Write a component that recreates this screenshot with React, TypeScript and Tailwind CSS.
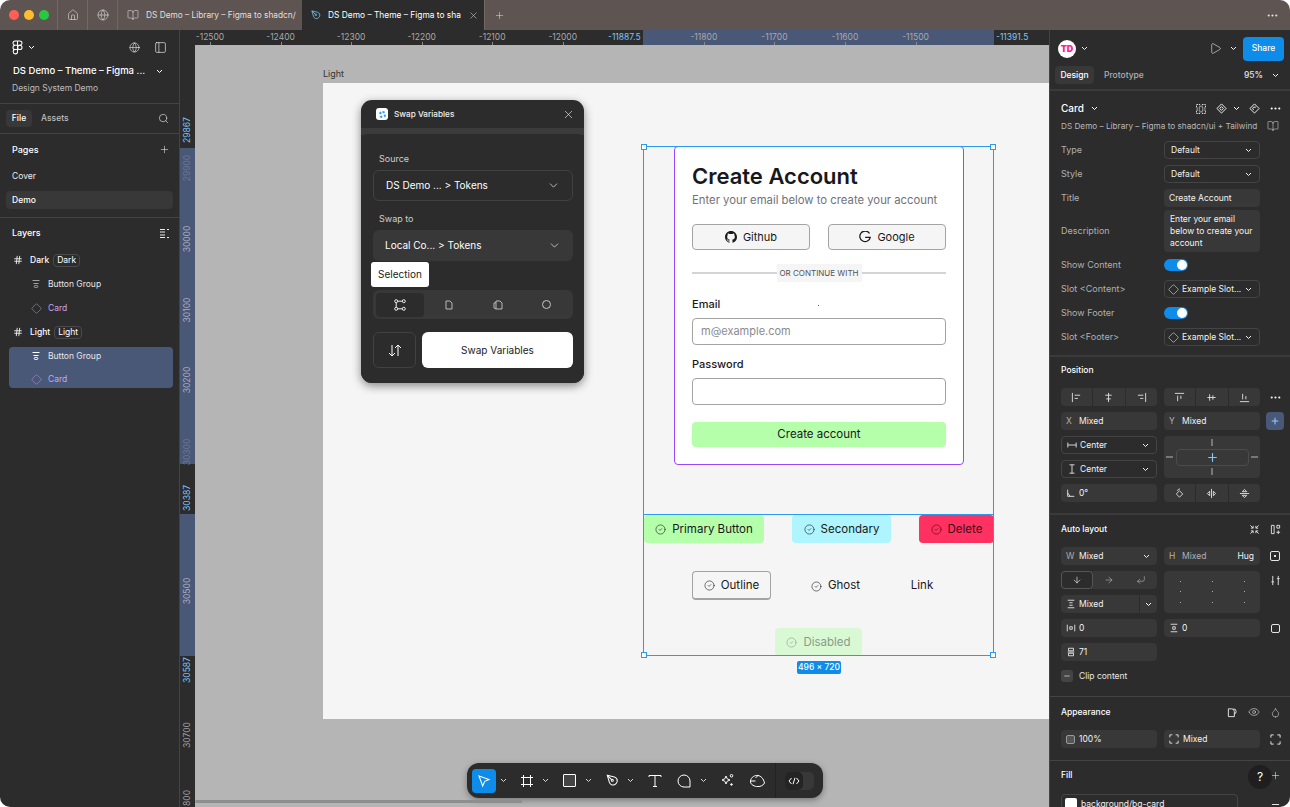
import React from 'react';
import {
  Home, Globe, BookOpen, X, Plus, MoreHorizontal, ChevronDown, Search, PanelLeft, Hash, Diamond,
  Play, ArrowDown, ArrowRight, CornerDownLeft, Eye, Droplet, CircleCheck, Minus,
} from 'lucide-react';

const inter = { fontFamily: 'Inter, sans-serif' };

const Chev = ({ className = 'text-white' }: { className?: string }) => (
  <svg width="7" height="5" viewBox="0 0 7 5" className={`shrink-0 ${className}`} fill="none" stroke="currentColor" strokeWidth="1"><path d="M1 1l2.5 2.5L6 1" /></svg>
);

const PenNib = ({ size = 14, className = '' }: { size?: number; className?: string }) => (
  <svg width={size} height={size} viewBox="0 0 16 16" fill="none" stroke="currentColor" strokeWidth="1.1" className={className}>
    <path d="M2.5 2.5l7.5 1.8c1.3.3 2.3 1.2 2.8 2.4.6 1.7.1 3.6-1.3 4.9-1.3 1.2-3 1.5-4.5.9-1.2-.5-2-1.5-2.4-2.8z" />
    <circle cx="7.8" cy="7.8" r="1.1" />
    <path d="M2.5 2.5l4.5 4.5" />
  </svg>
);

function TitleBar() {
  return (
    <div className="flex h-[30px] shrink-0 items-stretch bg-[#5e5553] text-[#e3dfde]">
      <div className="flex w-[58px] items-center gap-[5px] border-r border-[#716966] pl-[9px]">
        <span className="h-[10px] w-[10px] rounded-full bg-[#ff5f57]" />
        <span className="h-[10px] w-[10px] rounded-full bg-[#febc2e]" />
        <span className="h-[10px] w-[10px] rounded-full bg-[#28c840]" />
      </div>
      <div className="flex w-[30px] items-center justify-center border-r border-[#716966]"><Home size={12} strokeWidth={1.2} /></div>
      <div className="flex w-[30px] items-center justify-center border-r border-[#716966]"><Globe size={12} strokeWidth={1.2} /></div>
      <div className="flex w-[184px] items-center gap-[7px] whitespace-nowrap pl-[9px] text-[8.3px]">
        <BookOpen size={12} strokeWidth={1.1} className="shrink-0" />
        <span>DS Demo – Library – Figma to shadcn/</span>
      </div>
      <div className="flex w-[182px] items-center gap-[6px] bg-[#2c2c2c] pl-[8px] text-white">
        <PenNib size={12} className="shrink-0 text-[#6cc0f5]" />
        <span className="w-[130px] whitespace-nowrap text-[8.4px]">DS Demo – Theme – Figma to sha</span>
        <X size={11} strokeWidth={1.2} className="ml-[4px] shrink-0 text-[#d6d6d6]" />
      </div>
      <div className="flex w-[30px] items-center justify-center border-l border-[#716966]"><Plus size={11} strokeWidth={1.1} /></div>
      <div className="ml-auto flex items-center pr-[11px]"><MoreHorizontal size={13} /></div>
    </div>
  );
}

function Divider() {
  return <div className="h-px bg-[#444444]" />;
}

function LayerRow({ name, tag, indent, kind, selected }: { name: string; tag?: string; indent?: boolean; kind: 'frame' | 'group' | 'card'; selected?: boolean }) {
  return (
    <div className={`flex h-[24px] items-center gap-[4px] ${indent ? 'pl-[31px]' : 'pl-[13px]'} text-[8.5px]`}>
      {kind === 'frame' && <Hash size={10} strokeWidth={2} className="mr-[3px] text-white" />}
      {kind === 'group' && (
        <svg width="10" height="10" viewBox="0 0 10 10" fill="none" stroke="currentColor" className={`mr-[3px] ${selected ? 'text-white' : 'text-[#a0a0a0]'}`}>
          <path d="M1.5 1.5h7M2.5 4.5h5" /><rect x="3.2" y="6.5" width="3.6" height="2" rx="1" />
        </svg>
      )}
      {kind === 'card' && <Diamond size={11} strokeWidth={1.1} className="mr-[2px] text-[#b79be6]" />}
      <span className={kind === 'card' ? 'text-[#c7a4f4]' : kind === 'frame' ? 'font-medium text-white' : 'text-[#e6e6e6]'}>{name}</span>
      {tag && <span className="rounded-[4px] border border-[#4a4a4a] px-[3px] text-[8.5px] leading-[11px] text-white">{tag}</span>}
    </div>
  );
}

function LeftPanel() {
  return (
    <div className="flex w-[180px] shrink-0 flex-col border-r border-[#444444] bg-[#2c2c2c] text-[#f2f2f2]">
      <div className="flex h-[73px] flex-col">
        <div className="flex h-[34px] items-center pl-[12px] pr-[12px] pt-[1px]">
          <svg width="11" height="15" viewBox="0 0 11 16" fill="none" stroke="white" strokeWidth="1.1">
            <path d="M5.5 1H3a2.3 2.3 0 000 4.6h2.5zM5.5 1H8a2.3 2.3 0 010 4.6H5.5zM5.5 5.6H3a2.3 2.3 0 000 4.6h2.5zM5.5 10.2H3a2.3 2.3 0 102.5 2.3z" />
            <circle cx="8" cy="7.9" r="2.3" />
          </svg>
          <Chev className="ml-[5px] text-white" />
          <Globe size={11} strokeWidth={1.3} className="ml-auto" />
          <PanelLeft size={13} strokeWidth={1.2} className="ml-[14px]" />
        </div>
        <div className="flex items-center whitespace-nowrap pl-[13px] text-[9.5px] font-medium leading-[14px] text-white">
          DS Demo – Theme – Figma ...
          <Chev className="ml-[11px]" />
        </div>
        <div className="pl-[12px] pt-[4px] text-[8.5px] leading-[12px] text-[#bdbdbd]">Design System Demo</div>
      </div>
      <Divider />
      <div className="flex h-[29px] items-center pl-[6px] pr-[10px] text-[8.5px] font-medium">
        <span className="flex h-[17px] w-[26px] items-center justify-center rounded-[4px] bg-[#383838] text-white">File</span>
        <span className="ml-[9px] text-[#bdbdbd]">Assets</span>
        <Search size={11} strokeWidth={1.3} className="ml-auto" />
      </div>
      <Divider />
      <div className="flex h-[31px] items-center justify-between pl-[12px] pr-[9px] text-[9px] font-medium text-white">
        Pages <Plus size={11} strokeWidth={1.1} />
      </div>
      <div className="-mt-[1px] flex h-[24px] items-center pl-[12px] text-[8.5px] text-[#ececec]">Cover</div>
      <div className="mx-[6px] mt-[3px] flex h-[18px] items-center rounded-[4px] bg-[#383838] pl-[6px] text-[8.5px] font-medium text-white">Demo</div>
      <div className="h-[8px]" />
      <Divider />
      <div className="flex h-[30px] items-center justify-between pl-[12px] pr-[9px] text-[9px] font-medium text-white">
        Layers
        <svg width="11" height="11" viewBox="0 0 11 11" fill="none" stroke="white" strokeWidth=".9"><path d="M1 1.5h5M1 4h5M1 7h5M1 9.5h5M8 1l1 1 1-1M8 10l1-1 1 1" /></svg>
      </div>
      <LayerRow name="Dark" tag="Dark" kind="frame" />
      <LayerRow name="Button Group" indent kind="group" />
      <LayerRow name="Card" indent kind="card" />
      <LayerRow name="Light" tag="Light" kind="frame" />
      <div className="relative ml-[9px] mt-[3px] h-[41px] w-[164px] rounded-[4px] bg-[#4a5878]">
        <div className="-ml-[9px] -mt-[3px]">
          <LayerRow name="Button Group" indent kind="group" selected />
          <div className="-mt-[1px]"><LayerRow name="Card" indent kind="card" selected /></div>
        </div>
      </div>
    </div>
  );
}

const TOP_TICKS = [-12500, -12400, -12300, -12200, -12100, -12000];
const TOP_TICKS_SEL = [-11800, -11700, -11600, -11500];

function TopRuler() {
  const xOf = (v: number) => 210 + (v + 12500) * 0.7055 - 180;
  return (
    <div className="relative h-[15px] shrink-0 bg-[#2c2c2c] text-[8.5px] text-[#a8a8a8]">
      <div className="absolute bottom-0 left-[463px] top-0 w-[351px] bg-[#4a5878]" />
      {[...TOP_TICKS, ...TOP_TICKS_SEL].map((v) => (
        <span key={v} className="absolute top-[1px] -translate-x-1/2" style={{ left: xOf(v) }}>{v}</span>
      ))}
      {[...TOP_TICKS, ...TOP_TICKS_SEL].map((v) => (
        <span key={'t' + v} className="absolute bottom-0 h-[3px] w-px bg-[#8a8a8a]" style={{ left: xOf(v) }} />
      ))}
      <span className="absolute left-[428px] top-[1px] text-[#7cc4fa]">-11887.5</span>
      <span className="absolute left-[816px] top-[1px] text-[#7cc4fa]">-11391.5</span>
    </div>
  );
}

function LeftRuler() {
  const labels: [number, string, string][] = [
    [130 - 45, '29867', 'text-[#7cc4fa]'],
    [168 - 45, '29900', 'text-[#6b7690]'],
    [239 - 45, '30000', 'text-[#a8aebd]'],
    [310 - 45, '30100', 'text-[#a8aebd]'],
    [380 - 45, '30200', 'text-[#a8aebd]'],
    [452 - 45, '30300', 'text-[#6b7690]'],
    [498 - 45, '30387', 'text-[#7cc4fa]'],
    [591 - 45, '30500', 'text-[#a8aebd]'],
    [670 - 45, '30587', 'text-[#7cc4fa]'],
    [735 - 45, '30700', 'text-[#a0a0a0]'],
    [798 - 45, '800', 'text-[#a0a0a0]'],
  ];
  return (
    <div className="relative w-[15px] shrink-0 overflow-hidden bg-[#2c2c2c] text-[8.5px]">
      <div className="absolute left-0 right-0 top-[103px] h-[316px] bg-[#4a5878]" />
      <div className="absolute left-0 right-0 top-[469px] h-[142px] bg-[#4a5878]" />
      {labels.map(([y, t, c]) => (
        <span key={t} className={`absolute left-[7px] -translate-x-1/2 -translate-y-1/2 -rotate-90 whitespace-nowrap ${c}`} style={{ top: y }}>{t}</span>
      ))}
    </div>
  );
}

function Handle({ className }: { className: string }) {
  return <span className={`absolute h-[6px] w-[6px] border border-[#2b9bf0] bg-white ${className}`} />;
}

function DemoBtn({ label, className, icon = true }: { label: string; className: string; icon?: boolean }) {
  return (
    <div className={`absolute flex items-center justify-center gap-[6px] whitespace-nowrap rounded-[4px] pt-[1px] text-[11.5px] ${className}`}>
      {icon && <CircleCheck size={11} strokeWidth={1.3} />}
      {label}
    </div>
  );
}

function SwapPanel() {
  return (
    <div className="absolute left-[166px] top-[55px] w-[223px] rounded-[11px] bg-[#2c2c2c] text-white shadow-[0_3px_10px_rgba(0,0,0,0.45)]">
      <div className="flex h-[28px] items-center pl-[15px] pr-[9px]">
        <span className="flex h-[12px] w-[12px] items-center justify-center rounded-[3px] bg-white">
          <span className="h-[7px] w-[7px] rounded-full border-2 border-dotted border-[#2b9bf0]" />
        </span>
        <span className="ml-[6px] text-[8.2px] font-medium text-[#efefef]">Swap Variables</span>
        <X size={13} strokeWidth={1.1} className="ml-auto" />
      </div>
      <div className="h-[7px] bg-[#3b3b3b]" />
      <div className="relative -mt-px flex h-[249px] flex-col rounded-b-[11px] rounded-t-[6px] bg-[#2c2c2c] pl-[12px] pr-[11px] text-[9px]">
        <div className="pl-[6px] pt-[18px] leading-[13px] text-[#cfcfcf]">Source</div>
        <div className="mt-[5px] flex h-[31px] items-center justify-between rounded-[6px] border border-[#414141] px-[12px] text-[10px]">
          DS Demo ... &gt; Tokens <ChevronDown size={13} strokeWidth={1.2} />
        </div>
        <div className="pl-[6px] pt-[11px] leading-[13px] text-[#cfcfcf]">Swap to</div>
        <div className="mt-[5px] flex h-[31px] items-center justify-between rounded-[6px] bg-[#383838] px-[12px] text-[10px]">
          Local Co... &gt; Tokens <ChevronDown size={13} strokeWidth={1.2} />
        </div>
        <div className="relative z-10 -ml-[2px] mt-[1px] flex h-[25px] w-[58px] items-center justify-center rounded-[3px] bg-white text-[10px] text-[#222]">Selection</div>
        <div className="mt-[3px] flex h-[29px] items-center gap-[1px] rounded-[6px] bg-[#383838] px-[3px] text-[#c6c6c6]">
          <div className="flex h-[24px] w-[48px] items-center justify-center rounded-[4px] bg-[#2c2c2c]">
            <svg width="12" height="12" viewBox="0 0 12 12" fill="none" stroke="white" strokeWidth=".9"><circle cx="2.2" cy="2.2" r="1.5" /><circle cx="9.8" cy="2.2" r="1.5" /><circle cx="2.2" cy="9.8" r="1.5" /><circle cx="9.8" cy="9.8" r="1.5" /><path d="M3.7 2.2h4.600M2.200 3.700v4.600M3.700 9.800h4.600" /></svg>
          </div>
          <div className="flex flex-1 items-center justify-center"><svg width="10" height="10" viewBox="0 0 10 10" fill="none" stroke="currentColor" strokeWidth=".9"><path d="M2 1h4l2 2v6H2z" /></svg></div>
          <div className="flex flex-1 items-center justify-center"><svg width="12" height="10" viewBox="0 0 12 10" fill="none" stroke="currentColor" strokeWidth=".9"><path d="M4 1h4l2 2v6H4zM4 2.500L2 3v5l2 1" /></svg></div>
          <div className="flex flex-1 items-center justify-center"><span className="h-[9px] w-[9px] rounded-full border border-[#c6c6c6]" /></div>
        </div>
        <div className="mt-[13px] flex h-[36px] gap-[6px]">
          <div className="flex w-[43px] items-center justify-center rounded-[6px] border border-[#414141]">
            <svg width="14" height="13" viewBox="0 0 14 13" fill="none" stroke="white" strokeWidth="1"><path d="M4 1v11M1 9l3 3 3-3M10 12V1M7 4l3-3 3 3" /></svg>
          </div>
          <div className="flex flex-1 items-center justify-center rounded-[6px] bg-white text-[10px] text-[#222]">Swap Variables</div>
        </div>
      </div>
    </div>
  );
}

function GithubIcon() {
  return (
    <svg width="12" height="12" viewBox="0 0 16 16" fill="#1a1a1a"><path d="M8 0C3.58 0 0 3.58 0 8c0 3.54 2.29 6.53 5.47 7.59.4.07.55-.17.55-.38v-1.34c-2.23.48-2.7-1.07-2.7-1.07-.36-.93-.89-1.17-.89-1.17-.73-.5.05-.49.05-.49.8.06 1.23.83 1.23.83.71 1.22 1.87.87 2.33.66.07-.52.28-.87.5-1.07-1.78-.2-3.64-.89-3.64-3.95 0-.87.31-1.59.82-2.15-.08-.2-.36-1.02.08-2.12 0 0 .67-.21 2.2.82a7.6 7.6 0 014 0c1.53-1.04 2.2-.82 2.2-.82.44 1.1.16 1.92.08 2.12.51.56.82 1.27.82 2.15 0 3.07-1.87 3.75-3.65 3.95.29.25.54.73.54 1.48v2.19c0 .21.15.46.55.38A8 8 0 0016 8c0-4.42-3.58-8-8-8z" /></svg>
  );
}

function GoogleIcon() {
  return (
    <svg width="12" height="12" viewBox="0 0 16 16" fill="none" stroke="#1a1a1a" strokeWidth="1.7"><path d="M14 3.3A7 7 0 1015 8.4H8.2" /></svg>
  );
}

function SignupCard() {
  const field = 'h-[27px] rounded-[4px] border border-[#a3a3a3] bg-white';
  return (
    <div className="absolute left-[479px] top-[101px] flex h-[319px] w-[290px] flex-col rounded-[4px] border border-[#9747ff] bg-white px-[17px] text-[#18181b]">
      <div className="pt-[14px] text-[22px] font-semibold leading-[30px]">Create Account</div>
      <div className="mt-[1px] whitespace-nowrap text-[11.3px] leading-[16px] text-[#71717a]">Enter your email below to create your account</div>
      <div className="mt-[16px] flex justify-between">
        <div className="flex h-[26px] w-[118px] items-center justify-center gap-[6px] rounded-[4px] border border-[#a3a3a3] bg-[#f5f5f5] text-[11px]"><GithubIcon />Github</div>
        <div className="flex h-[26px] w-[118px] items-center justify-center gap-[6px] rounded-[4px] border border-[#a3a3a3] bg-[#f5f5f5] text-[11px]"><GoogleIcon />Google</div>
      </div>
      <div className="relative mt-[14px] flex h-[18px] items-center justify-center">
        <div className="absolute inset-x-0 top-[8px] h-[2px] bg-[#d4d4d4]" />
        <span className="relative flex h-[18px] w-[85px] items-center justify-center whitespace-nowrap bg-[#f5f5f5] text-[8px] text-[#52525b]">OR CONTINUE WITH</span>
      </div>
      <div className="mt-[13px] text-[11px] font-medium leading-[18px]">Email</div>
      <div className={`${field} mt-[5px] flex items-center pl-[8px] text-[11px] text-[#8a8a8f]`}>m@example.com</div>
      <div className="mt-[10px] text-[11px] font-medium leading-[18px]">Password</div>
      <div className={`${field} mt-[5px]`} />
      <div className="mt-[17px] flex h-[25px] items-center justify-center rounded-[4px] bg-[#b5ffab] text-[11.5px] text-[#18181b]">Create account</div>
    </div>
  );
}

function Toolbar() {
  const c = 'text-[#d8d8d8]';
  return (
    <div className="absolute bottom-[9px] left-[272px] flex h-[35px] w-[356px] items-center rounded-[12px] bg-[#2c2c2c] pl-[5px] text-white shadow-[0_2px_6px_rgba(0,0,0,0.35)]">
      <div className="flex h-[24px] w-[24px] items-center justify-center rounded-[4px] bg-[#0d8ce9]">
        <svg width="14" height="14" viewBox="0 0 14 14" fill="none" stroke="white" strokeWidth="1.1"><path d="M2 2l10 3.5-4.3 1.8L5.7 12z" /></svg>
      </div>
      <Chev className={`ml-[4px] ${c}`} />
      <svg width="14" height="14" viewBox="0 0 14 14" fill="none" stroke="white" strokeWidth="1" className="ml-[13px]"><path d="M3.5 1v12M10.5 1v12M1 3.5h12M1 10.5h12" /></svg>
      <Chev className={`ml-[8px] ${c}`} />
      <span className="ml-[14px] h-[13px] w-[13px] rounded-[1px] border border-white bg-[#444]" />
      <Chev className={`ml-[9px] ${c}`} />
      <PenNib size={15} className="ml-[13px]" />
      <Chev className={`ml-[7px] ${c}`} />
      <svg width="14" height="14" viewBox="0 0 14 14" fill="none" stroke="white" strokeWidth="1" className="ml-[14px]"><path d="M1 3V1.500h12V3M7 1.500v11M5 12.500h4" /></svg>
      <svg width="14" height="14" viewBox="0 0 14 14" fill="none" stroke="white" strokeWidth="1" className="ml-[15px]"><path d="M7 1a6 6 0 016 6v6H7A6 6 0 017 1z" /></svg>
      <Chev className={`ml-[9px] ${c}`} />
      <svg width="15" height="15" viewBox="0 0 15 15" fill="none" stroke="white" strokeWidth="1" className="ml-[13px]"><path d="M6 3l1.2 2.8L10 7 7.2 8.2 6 11 4.8 8.2 2 7l2.8-1.2z" /><circle cx="11.500" cy="2.800" r="1.300" /><circle cx="11.500" cy="11.500" r=".8" fill="white" /></svg>
      <svg width="17" height="14" viewBox="0 0 17 14" fill="none" stroke="white" strokeWidth="1" className="ml-[14px]"><path d="M1.500 7C2 3 6 1 9 1.500c3 .5 5.500 3 6.500 7.500-1 2.500-4.500 4-8 3.500C4 12 1.200 10 1.500 7zM1.500 7l5 0M9 1.500L6.500 4" /></svg>
      <div className="ml-[9px] h-full w-px bg-[#222]" />
      <div className="ml-[9px] flex h-[18px] w-[29px] rounded-[5px] bg-[#383838]">
        <div className="flex h-[18px] w-[18px] items-center justify-center rounded-[5px] bg-[#242424]">
          <svg width="12" height="8" viewBox="0 0 12 8" fill="none" stroke="white" strokeWidth="1"><path d="M3.500 1L1 4l2.500 3M8.500 1L11 4 8.500 7M7 .8L5 7.200" /></svg>
        </div>
      </div>
    </div>
  );
}

function Canvas() {
  return (
    <div className="relative flex-1 overflow-hidden bg-[#b5b5b5]" style={inter}>
      <span className="absolute left-[128px] top-[22px] text-[9px] text-[#333]">Light</span>
      <div className="absolute left-[128px] top-[38px] h-[636px] w-[740px] bg-[#f5f5f5]" />

      <SignupCard />

      {/* group of demo buttons */}
      <DemoBtn label="Primary Button" className="left-[449px] top-[470px] h-[28px] w-[120px] bg-[#b5ffab] text-[#18181b]" />
      <DemoBtn label="Secondary" className="left-[597px] top-[470px] h-[28px] w-[99px] bg-[#aef5ff] text-[#18181b]" />
      <DemoBtn label="Delete" className="left-[724px] top-[470px] h-[28px] w-[75px] bg-[#ff3161] text-[#3a0a16]" />
      <DemoBtn label="Outline" className="left-[497px] top-[526px] h-[29px] w-[79px] border border-b-2 border-[#a3a3a3] text-[#18181b]" />
      <DemoBtn label="Ghost" className="left-[616px] top-[526px] h-[29px] w-[49px] text-[#18181b]" />
      <DemoBtn label="Link" icon={false} className="left-[716px] top-[526px] h-[29px] w-[22px] text-[#18181b]" />
      <DemoBtn label="Disabled" className="left-[580px] top-[583px] h-[28px] w-[87px] bg-[#d9f9d4] text-[#8c9a8a]" />

      {/* selection overlay */}
      <div className="absolute left-[448px] top-[101px] h-[510px] w-[351px] border border-[#2b9bf0]">
        <Handle className="-left-[3px] -top-[3px]" />
        <Handle className="-right-[3px] -top-[3px]" />
        <Handle className="-bottom-[3px] -left-[3px]" />
        <Handle className="-bottom-[3px] -right-[3px]" />
      </div>
      <div className="absolute left-[448px] top-[469px] h-px w-[351px] bg-[#2b9bf0]" />
      <span className="absolute left-[623px] top-[260px] h-px w-px bg-[#ff00aa]" />
      <div className="absolute left-[602px] top-[616px] flex h-[13px] w-[44px] items-center justify-center whitespace-nowrap rounded-[2px] bg-[#0d8ce9] text-[8.5px] font-medium text-white">496 × 720</div>

      <SwapPanel />

      <Toolbar />
      <div className="absolute bottom-[4px] left-0 h-[3px] w-[327px] rounded-full bg-[#8e8e8e]" />
    </div>
  );
}

function PropRow({ label, children, className = 'h-[18px]' }: { label: string; children: React.ReactNode; className?: string }) {
  return (
    <div className={`flex items-center ${className}`}>
      <span className="w-[114px] pl-[11px] text-[9px] text-[#b0b0b0]">{label}</span>
      {children}
    </div>
  );
}

function Select({ children, icon }: { children: React.ReactNode; icon?: boolean }) {
  return (
    <div className={`flex h-[18px] w-[96px] items-center whitespace-nowrap rounded-[4px] border border-[#444444] ${icon ? 'pl-[3px]' : 'pl-[6px]'} pr-[7px] text-[8.5px] text-[#f2f2f2]`}>
      {icon && <Diamond size={11} strokeWidth={1.1} className="mr-[3px] shrink-0 text-white" />}
      <span>{children}</span>
      <Chev className="ml-auto" />
    </div>
  );
}

function Toggle() {
  return (
    <div className="flex h-[12px] w-[24px] items-center justify-end rounded-full bg-[#0d8ce9] pr-[1px]">
      <span className="h-[10px] w-[10px] rounded-full bg-white" />
    </div>
  );
}

function Field({ children, className = 'w-[96px]' }: { children: React.ReactNode; className?: string }) {
  return <div className={`flex h-[18px] items-center whitespace-nowrap rounded-[4px] bg-[#383838] px-[5px] text-[8.5px] text-[#f2f2f2] ${className}`}>{children}</div>;
}

function Seg({ children }: { children: React.ReactNode }) {
  return <div className="flex h-full flex-1 items-center justify-center border-r border-[#2c2c2c] last:border-r-0">{children}</div>;
}

function Ic({ d, size = 11 }: { d: string; size?: number }) {
  return <svg width={size} height={size} viewBox="0 0 12 12" fill="none" stroke="currentColor" strokeWidth="1" className="shrink-0"><path d={d} /></svg>;
}

function SectionHead({ title, children, className }: { title: string; children?: React.ReactNode; className: string }) {
  return (
    <div className={`flex items-center justify-between pl-[11px] pr-[9px] text-[8.5px] font-medium text-white ${className}`}>
      {title}
      {children}
    </div>
  );
}

function Rows({ children }: { children: React.ReactNode }) {
  return <div className="flex flex-col gap-[6px]">{children}</div>;
}

function TwoCol({ children, extra }: { children: React.ReactNode; extra?: React.ReactNode }) {
  return (
    <div className="flex h-[18px] items-center gap-[7px] pl-[11px]">
      {children}
      {extra && <div className="-ml-[1px] flex w-[18px] items-center justify-center text-[#f2f2f2]">{extra}</div>}
    </div>
  );
}

function RightPanel() {
  return (
    <div className="flex w-[241px] shrink-0 flex-col overflow-hidden border-l border-[#444444] bg-[#2c2c2c] text-[#f2f2f2] [&>*]:shrink-0">
      {/* head */}
      <div className="flex h-[36px] items-center pl-[8px] pr-[6px] pt-[1px]">
        <div className="flex h-[18px] w-[18px] items-center justify-center rounded-full bg-white">
          <span className="text-[9px] font-black leading-none text-[#ff1f8f]">TD</span>
        </div>
        <Chev className="ml-[5px]" />
        <Play size={13} strokeWidth={1.1} className="ml-auto" />
        <Chev className="ml-[8px]" />
        <div className="ml-[6px] flex h-[24px] w-[41px] items-center justify-center rounded-[4px] bg-[#0d8ce9] text-[8.5px] font-medium text-white">Share</div>
      </div>
      <div className="flex h-[18px] items-center pl-[5px] pr-[11px] text-[8.5px] font-medium">
        <span className="flex h-[18px] w-[39px] items-center justify-center rounded-[4px] bg-[#383838] text-white">Design</span>
        <span className="ml-[10px] text-[#b0b0b0]">Prototype</span>
        <span className="ml-auto text-[#e5e5e5]">95%</span>
        <Chev className="ml-[9px]" />
      </div>
      <div className="mt-[5px] h-[2px] bg-[#3a3a3a]" />
      <div className="flex h-[26px] items-center pl-[11px] pr-[8px] pt-[9px] text-[10px] font-medium text-white">
        Card <Chev className="ml-[7px]" />
        <div className="ml-auto flex items-center gap-[9px]">
          <span className="mr-[1px]"><svg width="10" height="10" viewBox="0 0 10 10" fill="none" stroke="white" strokeWidth=".8" strokeDasharray="1.500 .8"><rect x=".5" y=".5" width="3.500" height="3.500" /><rect x="6" y=".5" width="3.500" height="3.500" /><rect x=".5" y="6" width="3.500" height="3.500" /><rect x="6" y="6" width="3.500" height="3.500" /></svg></span>
          <span className="flex items-center gap-[6px]"><Ic d="M6 1l5 5-5 5-5-5zM6 4l2 2-2 2-2-2z" /><Chev /></span>
          <Ic d="M6 1l5 5-5 5-5-5zM7.500 4.500H5L4 6l1 1.500" />
          <MoreHorizontal size={13} />
        </div>
      </div>
      <div className="flex h-[18px] items-center whitespace-nowrap pl-[11px] pr-[11px] text-[8.2px] text-[#b8b8b8]">
        DS Demo – Library – Figma to shadcn/ui + Tailwind
        <BookOpen size={12} strokeWidth={1.1} className="ml-auto shrink-0 text-[#d8d8d8]" />
      </div>
      <div className="h-[6px]" />
      <Rows>
        <PropRow label="Type"><Select>Default</Select></PropRow>
        <PropRow label="Style"><Select>Default</Select></PropRow>
        <PropRow label="Title"><Field>Create Account</Field></PropRow>
      </Rows>
      <div className="h-[3px]" />
      <PropRow label="Description" className="h-[42px]">
        <div className="h-[42px] w-[96px] rounded-[4px] bg-[#383838] py-[3px] pl-[6px] text-[8.5px] leading-[12px] text-[#f2f2f2]">Enter your email below to create your account</div>
      </PropRow>
      <div className="h-[4px]" />
      <Rows>
        <PropRow label="Show Content"><Toggle /></PropRow>
        <PropRow label="Slot <Content>"><Select icon>Example Slot...</Select></PropRow>
        <PropRow label="Show Footer"><Toggle /></PropRow>
        <PropRow label="Slot <Footer>"><Select icon>Example Slot...</Select></PropRow>
      </Rows>
      <div className="mt-[9px] h-[2px] bg-[#3a3a3a]" />

      <SectionHead title="Position" className="h-[31px] pb-[5px]" />
      <div className="flex flex-col gap-[6px]">
        <TwoCol extra={<MoreHorizontal size={13} />}>
          <div className="flex h-[18px] w-[96px] rounded-[4px] bg-[#383838] text-[#e0e0e0]">
            <Seg><Ic d="M1.500 1v10M4 3.500h6M4 7h3.500" /></Seg>
            <Seg><Ic d="M6 1v10M2.500 3.500h7M3.500 7.500h5" /></Seg>
            <Seg><Ic d="M10.500 1v10M2 3.500h6M4.500 7H8" /></Seg>
          </div>
          <div className="flex h-[18px] w-[96px] rounded-[4px] bg-[#383838] text-[#e0e0e0]">
            <Seg><Ic d="M1 1.500h10M4 4v6M7.500 4v3.500" /></Seg>
            <Seg><Ic d="M1.500 6h9M4 2.500v7M7.500 3.500v5" /></Seg>
            <Seg><Ic d="M1 10.500h10M4 2v6M7.500 4.500V8" /></Seg>
          </div>
        </TwoCol>
        <TwoCol extra={<span className="flex h-[18px] w-[18px] items-center justify-center rounded-[4px] bg-[#4a5878] text-[#8ed0ff]"><Plus size={10} strokeWidth={2.5} /></span>}>
          <Field><span className="w-[13px] text-[#b0b0b0]">X</span>Mixed</Field>
          <Field><span className="w-[13px] text-[#b0b0b0]">Y</span>Mixed</Field>
        </TwoCol>
        <div className="flex h-[42px] gap-[7px] pl-[11px]">
          <div className="flex w-[96px] flex-col gap-[6px]">
            <div className="flex h-[18px] items-center rounded-[4px] border border-[#444444] pl-[5px] pr-[7px] text-[8.5px]">
              <Ic d="M1 3v6M11 3v6M1 6h10" size={10} /><span className="ml-[3px]">Center</span><Chev className="ml-auto" />
            </div>
            <div className="flex h-[18px] items-center rounded-[4px] border border-[#444444] pl-[5px] pr-[7px] text-[8.5px]">
              <Ic d="M3 1h6M3 11h6M6 1v10" size={10} /><span className="ml-[3px]">Center</span><Chev className="ml-auto" />
            </div>
          </div>
          <div className="flex h-[42px] w-[96px] flex-col items-center justify-between rounded-[4px] bg-[#383838] py-[3px]">
            <span className="h-[7px] w-[2px] bg-[#777]" />
            <div className="flex w-full items-center justify-between px-[2px]">
              <span className="h-[2px] w-[7px] bg-[#777]" />
              <div className="flex h-[17px] w-[73px] items-center justify-center rounded-[4px] border border-[#4c4c4c] text-[#7cc8fb]"><Plus size={13} strokeWidth={2.2} /></div>
              <span className="h-[2px] w-[7px] bg-[#777]" />
            </div>
            <span className="h-[7px] w-[2px] bg-[#777]" />
          </div>
        </div>
        <TwoCol>
          <Field><Ic d="M2 2v8h8M2 6l3 4" size={10} /><span className="ml-[3px]">0°</span></Field>
          <div className="flex h-[18px] w-[96px] rounded-[4px] bg-[#383838] text-[#e0e0e0]">
            <Seg><Ic d="M6 3l3.500 3.500L6 10 2.500 6.500zM3.500 3A3.500 3.500 0 016.500 1" /></Seg>
            <Seg><Ic d="M6 1v10M4 3.500v5L1.500 6zM8 3.500v5L10.500 6z" /></Seg>
            <Seg><Ic d="M1 6h10M3.500 4h5L6 1.500zM3.500 8h5L6 10.500z" /></Seg>
          </div>
        </TwoCol>
      </div>
      <div className="mt-[11px] h-[2px] bg-[#3a3a3a]" />

      <SectionHead title="Auto layout" className="h-[32px] pb-[3px]">
        <div className="flex items-center gap-[10px] text-[#e6e6e6]">
          <Ic d="M1.500 1.500l3 3M4.500 2v2.500H2M10.500 1.500l-3 3M7.500 2v2.500H10M1.500 10.500l3-3M2 7.500h2.500V10M10.500 10.500l-3-3M7.500 10V7.500H10" />
          <Ic d="M1.500 1.500h3v9h-3zM7.500 1.500h3v3h-3zM9 7v4M7 9h4" />
        </div>
      </SectionHead>
      <div className="flex flex-col gap-[6px]">
        <TwoCol extra={<span className="flex h-[10px] w-[10px] items-center justify-center rounded-[2px] border border-[#e6e6e6]"><span className="h-[2px] w-[2px] bg-[#e6e6e6]" /></span>}>
          <Field><span className="w-[13px] text-[#b0b0b0]">W</span>Mixed<Chev className="ml-auto mr-[2px]" /></Field>
          <Field><span className="w-[13px] text-[#b0b0b0]">H</span><span className="text-[#b0b0b0]">Mixed</span><span className="ml-auto mr-[1px]">Hug</span></Field>
        </TwoCol>
        <div className="flex h-[42px] gap-[7px] pl-[11px]">
          <div className="flex w-[96px] flex-col gap-[6px]">
            <div className="flex h-[18px] rounded-[4px] bg-[#383838]">
              <div className="flex w-[32px] items-center justify-center rounded-[4px] border border-[#555] bg-[#2c2c2c]"><ArrowDown size={10} strokeWidth={1.5} /></div>
              <div className="flex flex-1 items-center justify-center text-[#d0d0d0]"><ArrowRight size={10} strokeWidth={1.2} /></div>
              <div className="flex flex-1 items-center justify-center text-[#d0d0d0]"><CornerDownLeft size={10} strokeWidth={1.2} /></div>
            </div>
            <div className="flex h-[18px] items-center rounded-[4px] bg-[#383838] pl-[5px] text-[8.5px]">
              <Ic d="M2 1.500h8M2 10.500h8M4 4.500h4M4 7.500h4" size={10} />
              <span className="ml-[3px]">Mixed</span>
              <span className="ml-auto flex h-full w-[18px] items-center justify-center border-l border-[#2c2c2c]"><Chev /></span>
            </div>
          </div>
          <div className="grid h-[42px] w-[96px] grid-cols-3 place-items-center rounded-[4px] bg-[#383838] py-[5px]">
            {Array.from({ length: 9 }).map((_, i) => <span key={i} className="h-px w-px bg-[#aaa]" />)}
          </div>
          <div className="-ml-[1px] flex w-[18px] justify-center pt-[4px] text-[#e6e6e6]"><Ic d="M3 1v10M9 1v10M1.500 7.500h3M7.500 4h3" /></div>
        </div>
        <TwoCol extra={<span className="h-[9px] w-[9px] rounded-[2px] border border-[#e6e6e6]" />}>
          <Field><Ic d="M1.500 2v8M10.500 2v8M4.500 4.500h3v3h-3z" size={10} /><span className="ml-[3px]">0</span></Field>
          <Field><Ic d="M2 1.500h8M2 10.500h8M4.500 4.500h3v3h-3z" size={10} /><span className="ml-[3px]">0</span></Field>
        </TwoCol>
        <TwoCol>
          <Field><Ic d="M2 6h8M3 1.500h6v3H3zM3 7.500h6v3H3z" size={10} /><span className="ml-[3px]">71</span></Field>
        </TwoCol>
      </div>
      <div className="flex h-[24px] items-center pl-[11px] pt-[6px] text-[8.5px] text-[#e6e6e6]">
        <span className="flex h-[12px] w-[12px] items-center justify-center rounded-[3px] bg-[#444]"><Minus size={8} strokeWidth={2} /></span>
        <span className="ml-[6px]">Clip content</span>
      </div>
      <div className="mt-[11px] h-px bg-[#444444]" />

      <SectionHead title="Appearance" className="h-[33px] pb-[3px]">
        <div className="flex items-center gap-[10px] text-[#eee]">
          <Ic d="M1.500 2h3.500a3 3 0 013 3v5.500H1.500zM7 2a3 3 0 013 3 3 3 0 01-2 2.800" />
          <Eye size={12} strokeWidth={1.1} />
          <Droplet size={11} strokeWidth={1.1} />
        </div>
      </SectionHead>
      <TwoCol extra={<Ic d="M1 4V1h3M8 1h3v3M11 8v3H8M4 11H1V8" />}>
        <Field><span className="h-[9px] w-[9px] rounded-[2px] border border-[#999] bg-[#555]" /><span className="ml-[4px]">100%</span></Field>
        <Field><Ic d="M1 4V1h3M8 1h3v3M11 8v3H8M4 11H1V8" size={10} /><span className="ml-[4px]">Mixed</span></Field>
      </TwoCol>
      <div className="mt-[12px] h-px bg-[#444444]" />

      <SectionHead title="Fill" className="h-[33px] pb-[4px]">
        <Plus size={11} strokeWidth={1.1} />
      </SectionHead>
      <div className="flex items-center pl-[11px] pr-[9px]">
        <div className="flex h-[20px] w-[177px] items-center rounded-[4px] border border-[#444444] pl-[3px] text-[8.5px]">
          <span className="h-[12px] w-[12px] rounded-[2px] bg-white" />
          <span className="ml-[4px]">background/bg-card</span>
        </div>
        <Minus size={11} className="ml-auto" />
      </div>
    </div>
  );
}

export default function App() {
  return (
    <div className="h-[807px] w-[1290px] overflow-hidden bg-white" style={inter}>
      <div className="relative flex h-full flex-col overflow-hidden rounded-[10px]">
        <TitleBar />
        <div className="flex min-h-0 flex-1">
          <LeftPanel />
          <div className="flex min-w-0 flex-1 flex-col">
            <TopRuler />
            <div className="flex min-h-0 flex-1">
              <LeftRuler />
              <Canvas />
            </div>
          </div>
          <RightPanel />
        </div>
        {/* help bubble */}
        <div className="absolute bottom-[18px] right-[18px] flex h-[24px] w-[24px] items-center justify-center rounded-full bg-[#1f1f1f] text-[12px] text-white">?</div>
      </div>
    </div>
  );
}
